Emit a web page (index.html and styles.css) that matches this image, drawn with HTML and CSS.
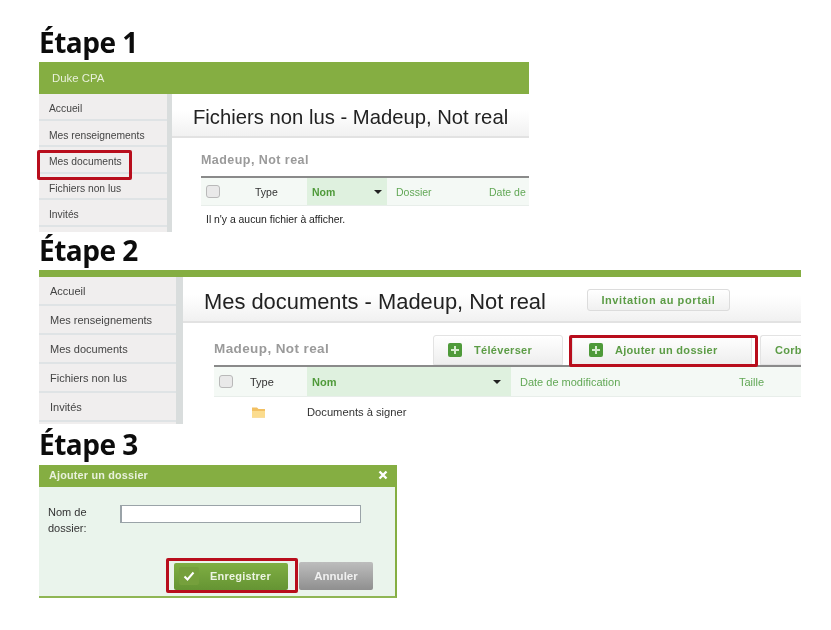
FILE: index.html
```html
<!DOCTYPE html>
<html lang="fr">
<head>
    <meta charset="utf-8">
    <title>Ajouter un dossier</title>
    <link rel="stylesheet" href="styles.css">
</head>
<body>
<h1 class="step">Étape 1</h1>
<div class="panel panel-one">
    <div class="brand">Duke CPA</div>
    <div class="panel-body">
        <ul class="side-nav">
            <li>Accueil</li>
            <li>Mes renseignements</li>
            <li class="marked">Mes documents<span class="red-box"></span></li>
            <li>Fichiers non lus</li>
            <li>Invités</li>
        </ul>
        <div class="main">
            <div class="main-head"><h2>Fichiers non lus - Madeup, Not real</h2></div>
            <div class="main-content">
                <div class="client-row"><span class="client">Madeup, Not real</span></div>
                <div class="table-head">
                    <span class="check"></span>
                    <span class="col-type">Type</span>
                    <span class="col-name">Nom<i class="caret"></i></span>
                    <span class="col-folder">Dossier</span>
                    <span class="col-date">Date de</span>
                </div>
                <p class="empty">Il n'y a aucun fichier à afficher.</p>
            </div>
        </div>
    </div>
</div>

<h1 class="step step-two">Étape 2</h1>
<div class="panel panel-two">
    <div class="top-line"></div>
    <div class="panel-body">
        <ul class="side-nav">
            <li>Accueil</li>
            <li>Mes renseignements</li>
            <li>Mes documents</li>
            <li>Fichiers non lus</li>
            <li>Invités</li>
        </ul>
        <div class="main">
            <div class="main-head">
                <h2>Mes documents - Madeup, Not real</h2>
                <button class="invite">Invitation au portail</button>
            </div>
            <div class="main-content">
                <div class="client-row">
                    <span class="client">Madeup, Not real</span>
                    <div class="tabs">
                        <button class="tab tab-upload"><i class="plus"></i>Téléverser</button>
                        <button class="tab tab-add"><i class="plus"></i>Ajouter un dossier<span class="red-box"></span></button>
                        <button class="tab tab-trash">Corb</button>
                    </div>
                </div>
                <div class="table-head">
                    <span class="check"></span>
                    <span class="col-type">Type</span>
                    <span class="col-name">Nom<i class="caret"></i></span>
                    <span class="col-date">Date de modification</span>
                    <span class="col-size">Taille</span>
                </div>
                <div class="file-row">
                    <svg class="folder" viewBox="0 0 15 12" width="15" height="12">
                        <path d="M1 1.500h5l1.500 1.500H14v8.500H1z" fill="#f2c062"/>
                        <path d="M1 5h13v6.500H1z" fill="#fbdc8e"/>
                    </svg>
                    <span>Documents à signer</span>
                </div>
            </div>
        </div>
    </div>
</div>

<h1 class="step step-three">Étape 3</h1>
<div class="dialog">
    <div class="dialog-title">
        <span>Ajouter un dossier</span>
        <svg viewBox="0 0 10 10" width="10" height="10">
            <path d="M1.500 1.500l7 7M8.500 1.500l-7 7" stroke="#fff" stroke-width="2.400" fill="none"/>
        </svg>
    </div>
    <div class="dialog-form">
        <label for="folder-name">Nom de dossier:</label>
        <input id="folder-name" type="text">
    </div>
    <div class="dialog-actions">
        <button class="save">
            <span class="save-icon">
                <svg viewBox="0 0 12 10" width="12" height="10">
                    <path d="M1.500 5.500l3 3 6-7" stroke="#fff" stroke-width="2" fill="none"/>
                </svg>
            </span>
            Enregistrer<span class="red-box"></span>
        </button>
        <button class="cancel">Annuler</button>
    </div>
</div>
</body>
</html>
```

FILE: styles.css
```css
* {
    box-sizing: border-box;
}
body {
    margin: 0;
    padding: 26px 30px 0 39px;
    background-color: #fff;
    font-family: 'Liberation Sans', Arial, sans-serif;
    color: #333;
}
ul {
    margin: 0;
    padding: 0;
    list-style: none;
}
button {
    font-family: inherit;
}
.step {
    margin: 0;
    height: 36px;
    font-family: 'Open Sans', sans-serif;
    font-size: 28px;
    line-height: 33px;
    font-weight: 700;
    letter-spacing: -0.5px;
    color: #0c0c0c;
    filter: blur(0.3px);
}
.step-two {
    margin-top: 2px;
}
.step-three {
    margin-top: 5px;
    line-height: 31px;
}
.panel {
    filter: blur(0.55px);
}
.panel-one {
    width: 490px;
    height: 170px;
}
.panel-two {
    width: 762px;
    height: 154px;
}
.brand {
    height: 32px;
    padding-left: 13px;
    background-color: #85ae42;
    color: #e8f0da;
    font-size: 11.400px;
    line-height: 33px;
}
.top-line {
    height: 7px;
    background-color: #85ae42;
}
.panel-body {
    display: flex;
}
.panel-one .panel-body {
    height: 138px;
}
.panel-two .panel-body {
    height: 147px;
}
.side-nav {
    flex: none;
    background-color: #f0eeee;
    font-size: 10.300px;
    color: #444;
}
.panel-one .side-nav {
    width: 133px;
    border-right: 5px solid #d9dddd;
}
.panel-two .side-nav {
    width: 144px;
    border-right: 7px solid #d9dddd;
    font-size: 11px;
}
.side-nav li {
    position: relative;
    border-bottom: 2px solid #dfe3e5;
    padding-left: 10px;
}
.panel-one .side-nav li {
    height: 26.600px;
    line-height: 29px;
}
.panel-two .side-nav li {
    height: 29px;
    padding-left: 11px;
    line-height: 29px;
}
.main {
    flex: 1;
    min-width: 0;
    overflow: hidden;
    background-color: #fff;
}
.main-head {
    display: flex;
    align-items: center;
    border-bottom: 2px solid #e2e2e2;
    background-image: linear-gradient(#fff 40%, #f1f1f1);
}
.main-head h2 {
    margin: 0;
    font-weight: 400;
    color: #222;
}
.panel-one .main-head {
    height: 44px;
    padding: 4px 0 0 21px;
}
.panel-one .main-head h2 {
    font-size: 20.250px;
}
.panel-two .main-head {
    height: 46px;
    padding: 6px 0 0 21px;
}
.panel-two .main-head h2 {
    font-size: 21.900px;
}
.invite {
    width: 143px;
    height: 22px;
    margin: -4px 0 0 41px;
    border: 1px solid #dcdcdc;
    border-radius: 3px;
    background-image: linear-gradient(#fff, #f0f0f0);
    color: #5c9c46;
    font-size: 11px;
    font-weight: 700;
    letter-spacing: 0.6px;
}
.main-content {
    padding-left: 29px;
}
.panel-one .main-content {
    padding-top: 12px;
}
.panel-two .main-content {
    padding-left: 31px;
    padding-top: 12px;
}
.client-row {
    display: flex;
    align-items: center;
    justify-content: space-between;
    height: 28px;
    border-bottom: 2px solid #8a8a8a;
}
.panel-two .client-row {
    height: 32px;
}
.client {
    color: #9a9a9a;
    font-weight: 700;
}
.panel-one .client {
    padding-bottom: 6px;
    font-size: 12.500px;
    letter-spacing: 0.45px;
}
.panel-two .client {
    padding-bottom: 4px;
    font-size: 13.500px;
    letter-spacing: 0.4px;
}
.tabs {
    display: flex;
    flex: none;
    width: 368px;
    margin-top: -1px;
}
.tab {
    display: flex;
    flex: none;
    align-items: center;
    height: 30px;
    padding: 0;
    border: 1px solid #e3e3e3;
    border-radius: 3px 3px 0 0;
    background-image: linear-gradient(#fff, #eee);
    color: #5c9c46;
    font-size: 11px;
    font-weight: 700;
    letter-spacing: 0.3px;
}
.tab-upload {
    width: 130px;
    padding-left: 14px;
}
.tab-add {
    position: relative;
    width: 180px;
    margin-left: 9px;
    padding-left: 16px;
}
.tab-trash {
    width: 41px;
    margin-left: 8px;
    padding-left: 14px;
    border-right: 0;
    border-radius: 3px 0 0;
}
.plus {
    position: relative;
    width: 14px;
    height: 14px;
    margin-right: 12px;
    border-radius: 2px;
    background-color: #4f9a3a;
}
.plus::before,
.plus::after {
    content: "";
    position: absolute;
    background-color: #d8ecd0;
}
.plus::before {
    left: 3px;
    top: 6px;
    width: 8px;
    height: 2px;
}
.plus::after {
    left: 6px;
    top: 3px;
    width: 2px;
    height: 8px;
}
.table-head {
    display: flex;
    align-items: stretch;
    border-bottom: 1px solid #e8eeea;
    background-color: #f4f9f5;
    color: #62a856;
    font-size: 10.500px;
}
.panel-one .table-head {
    height: 28px;
}
.panel-two .table-head {
    height: 30px;
    font-size: 11px;
}
.table-head span {
    display: flex;
    align-items: center;
    flex: none;
}
.check {
    align-self: center;
    width: 14px;
    height: 13px;
    margin-left: 5px;
    border: 1px solid #b9b9b9;
    border-radius: 3px;
    background-color: #e9e9e9;
}
.table-head .col-type {
    color: #333;
}
.panel-one .col-type {
    width: 52px;
    margin-left: 35px;
}
.panel-two .col-type {
    width: 57px;
    margin-left: 17px;
    padding-right: 1px;
}
.table-head .col-name {
    justify-content: space-between;
    padding: 0 5px;
    background-color: #dff1df;
    color: #4f9a3a;
    font-weight: 700;
}
.panel-one .col-name {
    width: 80px;
}
.panel-two .col-name {
    width: 204px;
    padding-right: 10px;
}
.caret {
    width: 0;
    height: 0;
    border-left: 4px solid transparent;
    border-right: 4px solid transparent;
    border-top: 4px solid #222;
}
.panel-one .col-folder {
    width: 93px;
    margin-left: 9px;
}
.panel-one .col-date {
    width: 41px;
    white-space: nowrap;
}
.panel-two .col-date {
    width: 219px;
    margin-left: 9px;
}
.empty {
    margin: 8px 0 0 5px;
    color: #222;
    font-size: 10.400px;
}
.file-row {
    display: flex;
    align-items: center;
    height: 30px;
    padding-left: 37px;
    color: #333;
    font-size: 11.200px;
}
.folder {
    margin-right: 41px;
}
.dialog {
    width: 358px;
    height: 133px;
    border-right: 2px solid #85ae42;
    border-bottom: 2px solid #8fb654;
    background-color: #eaf4ec;
    filter: blur(0.55px);
}
.dialog-title {
    display: flex;
    align-items: center;
    justify-content: space-between;
    height: 22px;
    padding: 0 7px 2px 10px;
    background-color: #85ae42;
    color: #e9f1dc;
    font-size: 10.800px;
    font-weight: 700;
    letter-spacing: 0.2px;
}
.dialog-form {
    display: flex;
    height: 75px;
    padding: 18px 0 0 9px;
}
.dialog-form label {
    width: 72px;
    font-size: 11px;
    line-height: 16px;
    color: #333;
    margin-top: -1px;
}
.dialog-form input {
    width: 241px;
    height: 18px;
    border: 1px solid #9aa3a8;
    border-left-width: 2px;
    background-color: #fff;
}
.dialog-actions {
    display: flex;
    align-items: center;
    padding-left: 135px;
    gap: 11px;
}
.save {
    position: relative;
    display: flex;
    align-items: center;
    width: 114px;
    height: 27px;
    padding: 0 0 0 5px;
    border: 0;
    border-radius: 2px;
    background-image: linear-gradient(#7fae43, #659433);
    color: #edf4e2;
    font-size: 11px;
    font-weight: 700;
    letter-spacing: 0.2px;
}
.save-icon {
    display: flex;
    align-items: center;
    justify-content: center;
    width: 20px;
    height: 18px;
    margin-right: 11px;
    border-radius: 2px;
    background-color: #75a03c;
}
.cancel {
    width: 74px;
    height: 28px;
    border: 0;
    border-radius: 2px;
    background-image: linear-gradient(#bdbdbd, #8f8f8f);
    color: #f0f0f0;
    font-size: 11.500px;
    font-weight: 700;
}
.red-box {
    position: absolute;
    border: 3px solid #b80d1c;
    border-radius: 2px;
    pointer-events: none;
}
.marked .red-box {
    left: -2px;
    top: 3px;
    width: 95px;
    height: 30px;
}
.tab-add .red-box {
    left: -4px;
    top: -1px;
    width: 189px;
    height: 32px;
}
.save .red-box {
    left: -8px;
    top: -5px;
    width: 132px;
    height: 35px;
}
```
